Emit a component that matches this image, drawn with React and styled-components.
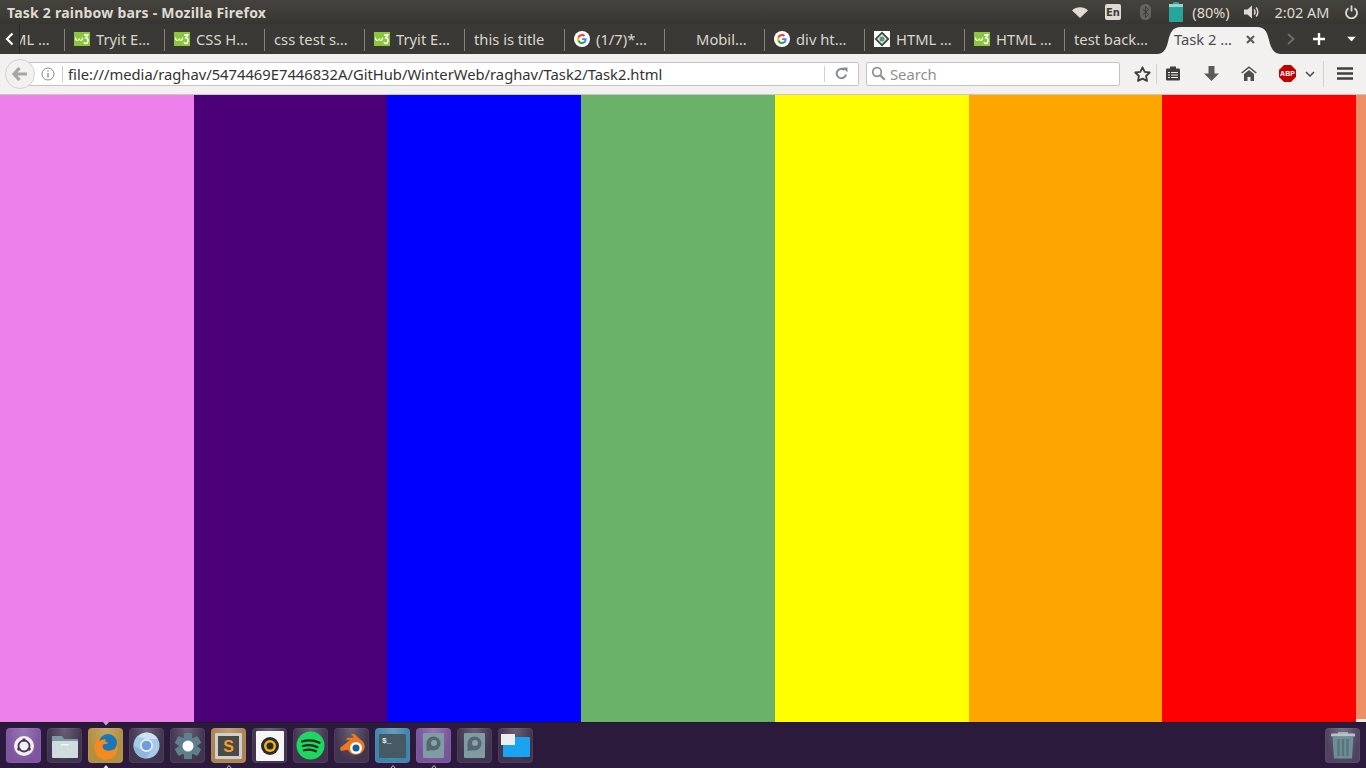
import styled, { createGlobalStyle } from 'styled-components';

const Global = createGlobalStyle`
  html, body { margin:0; padding:0; height:100%; overflow:hidden; }
  body { font-family:"Noto Sans","Open Sans",sans-serif; }
`;

const Screen = styled.div`width:1366px; height:768px; display:flex; flex-direction:column; overflow:hidden; background:#2c1a3d;`;

/* ---- ubuntu panel ---- */
const Panel = styled.div`height:24px; flex:none; display:flex; align-items:center; justify-content:space-between; background:linear-gradient(#45433e,#383632); box-sizing:border-box; padding:0 8px 0 7px;`;
const Title = styled.div`font:bold 14px "Noto Sans",sans-serif; letter-spacing:.23px; color:#dfdbd2; white-space:nowrap;`;
const Tray = styled.div`display:flex; align-items:center; height:24px; font:14.5px "Noto Sans",sans-serif; color:#dfdbd2;`;
const TrayItem = styled.div`display:flex; align-items:center; justify-content:center; flex:none; width:${p=>p.$w}px; margin-left:${p=>p.$ml||0}px;`;
const EnBadge = styled.div`width:16px; height:16px; border-radius:2px; background:#dfdbd2; color:#3c3a36; font:bold 10px "DejaVu Sans",sans-serif; display:flex; align-items:center; justify-content:center;`;

/* ---- tabs ---- */
const TabBar = styled.div`height:30px; flex:none; display:flex; background:#3a3935; color:#dbd7cc; box-sizing:border-box; position:relative;`;
const ArrowBox = styled.div`width:20px; flex:none; display:flex; align-items:center; justify-content:center; border-right:1px solid #2a2926; box-sizing:border-box; height:30px;`;
const Tab = styled.div`width:${p=>p.$w||100}px; flex:none; box-sizing:border-box; height:22px; margin-top:5px; padding-bottom:2px; border-right:1px solid ${p=>p.$last?'transparent':'#86847e'}; display:flex; align-items:center; gap:6px; padding-left:${p=>p.$pl??9}px; text-indent:${p=>p.$indent||0}px; font:14.75px "Noto Sans",sans-serif; white-space:nowrap; overflow:hidden;`;
const FavSlot = styled.span`width:16px; height:16px; flex:none; display:flex; align-items:center;`;
const ActiveTab = styled.div`position:relative; width:112px; flex:none; height:28px; margin-top:2px; color:#4c4c4c; display:flex; align-items:center; justify-content:space-between; padding:0 22px 2px 9px; box-sizing:border-box; font:14.75px "Noto Sans",sans-serif;`;
const TabShape = styled.svg`position:absolute; left:-8px; top:0;`;
const TabLabel = styled.span`position:relative;`;
const TabClose = styled.svg`position:relative;`;
const TabEnd = styled.div`flex:1; position:relative; height:30px;`;
const EndIcon = styled.div`position:absolute; left:${p=>p.$x}px; top:50%; transform:translateY(-50%); display:flex;`;

/* ---- nav bar ---- */
const NavBar = styled.div`height:41px; flex:none; display:flex; align-items:center; background:#f2f1f0; border-bottom:1px solid #c9c7c5; box-sizing:border-box; padding-left:5px; padding-bottom:1px;`;
const BackBtn = styled.div`width:30px; height:30px; border-radius:50%; flex:none; background:#f2f1f0; border:1px solid #d3d1cf; box-sizing:border-box; display:flex; align-items:center; justify-content:center; position:relative; z-index:1; margin-right:-8px;`;
const UrlBar = styled.div`width:832px; height:24px; flex:none; background:#fff; border:1px solid #c5c3c1; border-left:none; border-radius:0 2px 2px 0; box-sizing:border-box; display:flex; align-items:center; padding-left:14px;`;
const InfoDivider = styled.div`width:1px; height:16px; background:#c9c7c5; margin:0 5px 0 7px;`;
const UrlText = styled.div`flex:1; font:14.75px "Noto Sans",sans-serif; color:#333; white-space:nowrap;`;
const Reload = styled.div`width:33px; height:16px; border-left:1px solid #d3d1cf; display:flex; align-items:center; justify-content:center; flex:none;`;
const SearchBox = styled.div`width:254px; height:24px; flex:none; margin-left:7px; background:#fff; border:1px solid #c5c3c1; border-radius:2px; box-sizing:border-box; display:flex; align-items:center; padding-left:4px; gap:4px; font:14.75px "Noto Sans",sans-serif; color:#8f8f8f;`;
const ToolIcons = styled.div`display:flex; align-items:center; flex:1; height:32px;`;
const ToolIcon = styled.div`width:${p=>p.$w}px; margin-left:${p=>p.$ml||0}px; flex:none; display:flex; justify-content:center; align-items:center;`;
const ToolSep = styled.div`width:1px; height:${p=>p.$h||20}px; flex:none; background:#d3d1cf;`;

/* ---- rainbow ---- */
const Bars = styled.div`flex:1; display:flex; background:#ececec; min-height:0;`;
const Bar = styled.div`width:193.71px; flex:none; background:${p=>p.$c};`;
const LastBar = styled.div`flex:1; height:624px; background:#ee8f66;`;

/* ---- dock ---- */
const Dock = styled.div`height:46px; flex:none; display:flex; align-items:center; background:#2c1a3d; box-sizing:border-box; padding:0 6px; gap:6px; position:relative; border-top:1px solid #1f1a28;`;
const Tile = styled.div`position:relative; width:35px; height:35px; flex:none; border-radius:4px; background:radial-gradient(ellipse at 50% 0,rgba(255,255,255,.24),rgba(255,255,255,.03) 70%),${p=>p.$bg||'#3c2e4a'}; box-shadow:inset 0 0 0 1px rgba(255,255,255,.05); display:flex; align-items:center; justify-content:center;`;
const Spacer = styled.div`flex:1;`;
const Pip = styled.svg`position:absolute; left:50%; margin-left:-3px; ${p=>p.$top?'top:-6px;':'bottom:-6px;'}`;

const PipBelow = ({ hollow }) => (
  <Pip width="6" height="4" viewBox="0 0 6 4">
    <path d="M3 .5L5.500 3.500H.5z" fill={hollow ? 'none' : '#efeaf0'} stroke="#efeaf0" strokeWidth=".8"/>
  </Pip>
);

const PipAbove = () => (
  <Pip $top width="6" height="4" viewBox="0 0 6 4"><path d="M0 0h6L3 3.500z" fill="#b8b2be"/></Pip>
);

const W3 = () => (
  <svg width="16" height="14" viewBox="0 0 16 14">
    <rect width="16" height="14" fill="#8cc63f"/>
    <path d="M1.500 5.500c0 2 1 3 2 3s1.500-1 1.700-2c.2 1 .7 2 1.700 2s1.500-1 1.600-3" fill="none" stroke="#fff" strokeWidth="1.200"/>
    <path d="M10 3h3.800l-2 2.800c1.400 0 2.200 1 2.200 2.700S12.900 11.500 11.700 11.500c-.8 0-1.500-.4-1.900-1.200" fill="none" stroke="#fff" strokeWidth="1.400"/>
  </svg>
);

const GoogleG = () => (
  <svg width="16" height="16" viewBox="0 0 16 16">
    <circle cx="8" cy="8" r="8" fill="#fff"/>
    <path d="M12.600 8.200c0-.4 0-.7-.1-1H8v1.900h2.600c-.1.600-.5 1.200-1 1.500v1.300h1.600c1-.9 1.400-2.200 1.400-3.700z" fill="#4285f4"/>
    <path d="M8 13c1.300 0 2.400-.4 3.200-1.200l-1.600-1.200c-.4.300-1 .5-1.600.5-1.200 0-2.300-.8-2.700-2H3.700v1.300C4.500 12 6.100 13 8 13z" fill="#34a853"/>
    <path d="M5.300 9.100c-.2-.7-.2-1.500 0-2.200V5.600H3.700c-.7 1.500-.7 3.300 0 4.800z" fill="#fbbc05"/>
    <path d="M8 5c.7 0 1.300.2 1.800.7l1.400-1.400C10.400 3.500 9.300 3 8 3 6.100 3 4.500 4 3.700 5.600l1.600 1.300C5.700 5.800 6.800 5 8 5z" fill="#ea4335"/>
  </svg>
);

const Diamond = () => (
  <svg width="16" height="16" viewBox="0 0 16 16">
    <rect width="16" height="16" fill="#fff"/>
    <path d="M8 .5L15.500 8 8 15.500.5 8z" fill="#3c4a44"/>
    <path d="M8 3l5 5-5 5-5-5z" fill="#dfe8e0"/>
    <circle cx="8" cy="8" r="2.500" fill="#5c9a6a"/>
  </svg>
);

const DiskIcon = () => (
  <svg width="21" height="25" viewBox="0 0 21 25">
    <rect width="21" height="25" rx="1" fill="#7f9ca5"/>
    <circle cx="10.500" cy="10.500" r="7" fill="#55686f"/>
    <path d="M3.500 11v7l6-1z" fill="#55686f"/>
    <circle cx="11" cy="10" r="3" fill="#8aa3ab"/>
  </svg>
);

const Gear = () => (
  <svg width="28" height="28" viewBox="0 0 28 28">
    {[0, 60, 120, 180, 240, 300].map(a => (
      <rect key={a} x="10" y="1" width="8" height="26" rx="1.500" fill="#5f7f8c" transform={`rotate(${a} 14 14)`}/>
    ))}
    <circle cx="14" cy="14" r="9.500" fill="#5f7f8c"/>
    <circle cx="14" cy="14" r="5.500" fill="#fff"/>
  </svg>
);

const tabs = [
  { icon: <W3/>, text: 'Tryit E…' },
  { icon: <W3/>, text: 'CSS H…' },
  { text: 'css test s…' },
  { icon: <W3/>, text: 'Tryit E…' },
  { text: 'this is title' },
  { icon: <GoogleG/>, text: '(1/7)*…' },
  { blank: true, text: 'Mobil…' },
  { icon: <GoogleG/>, text: 'div ht…' },
  { icon: <Diamond/>, text: 'HTML …' },
  { icon: <W3/>, text: 'HTML …' },
  { text: 'test back…', last: true },
];

const bars = ['#ee80ec', '#4b0078', '#0000ff', '#6ab26a', '#ffff00', '#ffa500', '#ff0000'];

export default function App() {
  return (
    <Screen>
      <Global/>
      <Panel>
        <Title>Task 2 rainbow bars - Mozilla Firefox</Title>
        <Tray>
          <TrayItem $w={18}>
            <svg width="16" height="11" viewBox="0 0 16 11"><path d="M0 3.500C4-.8 12-.8 16 3.500L8 11z" fill="#dfdbd2"/></svg>
          </TrayItem>
          <TrayItem $w={16} $ml={16}><EnBadge>En</EnBadge></TrayItem>
          <TrayItem $w={12} $ml={18}>
            <svg width="11" height="16" viewBox="0 0 11 16"><rect width="11" height="16" rx="5" fill="#66645f"/><path d="M2.500 5l6 5.500-3 3v-11l3 3-6 5.500" fill="none" stroke="#3c3a36"/></svg>
          </TrayItem>
          <TrayItem $w={14} $ml={18}>
            <svg width="14" height="20" viewBox="0 0 14 20"><rect x="4" width="6" height="2" fill="#26a69a"/><rect y="2" width="14" height="18" rx="1" fill="#26a69a"/><rect y="2" width="14" height="3" fill="#9ed3cc"/></svg>
          </TrayItem>
          <TrayItem $w={40} $ml={8}>(80%)</TrayItem>
          <TrayItem $w={16} $ml={12}>
            <svg width="15" height="14" viewBox="0 0 15 14"><path d="M0 4.500h3.500L8 .5v13L3.500 9.500H0z" fill="#dfdbd2"/><path d="M10 4.500a3.500 3.500 0 0 1 0 5M12 2.500a6.500 6.500 0 0 1 0 9" fill="none" stroke="#dfdbd2" strokeWidth="1.500"/></svg>
          </TrayItem>
          <TrayItem $w={56} $ml={15}>2:02 AM</TrayItem>
          <TrayItem $w={14} $ml={14}>
            <svg width="13" height="14" viewBox="0 0 13 14"><path d="M3.500 3.200a5.500 5.500 0 1 0 6 0M6.500 .5v6" fill="none" stroke="#dfdbd2" strokeWidth="1.800"/></svg>
          </TrayItem>
        </Tray>
      </Panel>

      <TabBar>
        <ArrowBox>
          <svg width="9" height="14" viewBox="0 0 9 14"><path d="M7.500 1.500L2 7l5.500 5.500" fill="none" stroke="#fff" strokeWidth="2.200"/></svg>
        </ArrowBox>
        <Tab $w={45} $pl={0} $indent={-7}>ML …</Tab>
        {tabs.map((t, i) => (
          <Tab key={i} $last={t.last}>
            {t.icon ? <FavSlot>{t.icon}</FavSlot> : t.blank ? <FavSlot/> : null}
            {t.text}
          </Tab>
        ))}
        <ActiveTab>
          <TabShape width="124" height="28" viewBox="0 0 124 28">
            <path d="M0 28C6 28 9 24 11 16 13 6 16 1 24 1L100 1C108 1 110 6 112 14 114 23 117 28 124 28Z" fill="#f2f1f0"/>
          </TabShape>
          <TabLabel>Task 2 …</TabLabel>
          <TabClose width="9" height="9" viewBox="0 0 9 9"><path d="M1 1l7 7M8 1L1 8" stroke="#5c5c5c" strokeWidth="2.200"/></TabClose>
        </ActiveTab>
        <TabEnd>
          <EndIcon $x={10}>
            <svg width="8" height="12" viewBox="0 0 8 12"><path d="M1 1l5.500 5L1 11" fill="none" stroke="#6f6e69" strokeWidth="1.800"/></svg>
          </EndIcon>
          <EndIcon $x={35}>
            <svg width="14" height="14" viewBox="0 0 14 14"><path d="M7 1v12M1 7h12" stroke="#fff" strokeWidth="2.400"/></svg>
          </EndIcon>
          <EndIcon $x={70}>
            <svg width="9" height="5" viewBox="0 0 9 5"><path d="M0 0h9L4.500 5z" fill="#fff"/></svg>
          </EndIcon>
        </TabEnd>
      </TabBar>

      <NavBar>
        <BackBtn>
          <svg width="16" height="14" viewBox="0 0 16 14"><path d="M7.500 1L2 7l5.500 6M2.500 7H15" fill="none" stroke="#a8a6a4" strokeWidth="3.200"/></svg>
        </BackBtn>
        <UrlBar>
          <svg width="14" height="14" viewBox="0 0 14 14"><circle cx="7" cy="7" r="6" fill="none" stroke="#8a8886"/><path d="M7 6v4.500M7 3.500v1.300" stroke="#8a8886" strokeWidth="1.300"/></svg>
          <InfoDivider/>
          <UrlText>file:///media/raghav/5474469E7446832A/GitHub/WinterWeb/raghav/Task2/Task2.html</UrlText>
          <Reload>
            <svg width="13" height="13" viewBox="0 0 13 13"><path d="M11 7.500A4.700 4.700 0 1 1 9.500 3" fill="none" stroke="#7e8c98" strokeWidth="2"/><path d="M7.500 .5h5v5z" fill="#7e8c98"/></svg>
          </Reload>
        </UrlBar>
        <SearchBox>
          <svg width="15" height="15" viewBox="0 0 15 15"><circle cx="6" cy="6" r="4.300" fill="none" stroke="#8f8f8f" strokeWidth="1.700"/><path d="M9.300 9.300l4.500 4.500" stroke="#8f8f8f" strokeWidth="2.200"/></svg>
          Search
        </SearchBox>
        <ToolIcons>
          <ToolIcon $w={18} $ml={13}>
            <svg width="17" height="16" viewBox="0 0 17 16"><path d="M8.500 1.300l2.200 4.500 5 .7-3.600 3.500.9 4.900-4.500-2.300-4.500 2.300.9-4.900L1.300 6.500l5-.7z" fill="none" stroke="#3f3f3f" strokeWidth="1.800" strokeLinejoin="round"/></svg>
          </ToolIcon>
          <ToolIcon $w={1} $ml={5}><ToolSep/></ToolIcon>
          <ToolIcon $w={16} $ml={8}>
            <svg width="14" height="15" viewBox="0 0 14 15"><rect y="2.500" width="14" height="12" rx="1" fill="#3f3f3f"/><rect x="4" y=".5" width="6" height="3" fill="#3f3f3f"/><path d="M2 6.500h10M2 9h10M2 11.500h10" stroke="#f2f1f0" strokeWidth="1"/><path d="M4.500 5.500v7.500" stroke="#3f3f3f" strokeWidth="1.200"/></svg>
          </ToolIcon>
          <ToolIcon $w={16} $ml={22}>
            <svg width="15" height="15" viewBox="0 0 15 15"><path d="M4.500 0h6v7.500H15L7.500 15 0 7.500h4.500z" fill="#5a5a5a"/></svg>
          </ToolIcon>
          <ToolIcon $w={16} $ml={22}>
            <svg width="16" height="15" viewBox="0 0 16 15"><path d="M.7 7L8 1.200 15.300 7" fill="none" stroke="#4f4f4f" strokeWidth="1.500"/><path d="M3 8l5-4 5 4v7H9.500v-4h-3v4H3z" fill="#4f4f4f"/></svg>
          </ToolIcon>
          <ToolIcon $w={18} $ml={21}>
            <svg width="17" height="17" viewBox="0 0 17 17"><path d="M5 0h7l5 5v7l-5 5H5l-5-5V5z" fill="#c30000"/><text x="8.500" y="11" fontSize="7" fontWeight="bold" fill="#fff" textAnchor="middle" fontFamily="Liberation Sans">ABP</text></svg>
          </ToolIcon>
          <ToolIcon $w={10} $ml={9}>
            <svg width="10" height="6" viewBox="0 0 10 6"><path d="M1 1l4 4 4-4" fill="none" stroke="#4f4f4f" strokeWidth="1.600"/></svg>
          </ToolIcon>
          <ToolIcon $w={1} $ml={8}><ToolSep $h={26}/></ToolIcon>
          <ToolIcon $w={16} $ml={13}>
            <svg width="16" height="13" viewBox="0 0 16 13"><path d="M0 1.500h16M0 6.500h16M0 11.500h16" stroke="#3f3f3f" strokeWidth="2.400"/></svg>
          </ToolIcon>
        </ToolIcons>
      </NavBar>

      <Bars>
        {bars.map(c => <Bar key={c} $c={c}/>)}
        <LastBar/>
      </Bars>

      <Dock>
        <Tile $bg="#7a4f9c">
          <svg width="26" height="26" viewBox="0 0 26 26"><circle cx="13" cy="13" r="10" fill="#f4f0f6"/><circle cx="13" cy="13" r="5.500" fill="none" stroke="#4a3a55" strokeWidth="1.800"/><circle cx="13" cy="7" r="1.700" fill="#4a3a55"/><circle cx="7.800" cy="16" r="1.700" fill="#4a3a55"/><circle cx="18.200" cy="16" r="1.700" fill="#4a3a55"/></svg>
        </Tile>
        <Tile>
          <svg width="28" height="26" viewBox="0 0 28 26"><path d="M1 3h10l2 3h14v4H1z" fill="#7e9aa0"/><rect x="1" y="8" width="26" height="17" rx="1" fill="#cfdcde"/><rect x="10" y="11" width="8" height="1.500" fill="#f2f5f5"/></svg>
        </Tile>
        <Tile $bg="#b08c3a">
          <PipAbove/>
          <svg width="28" height="28" viewBox="0 0 28 28"><circle cx="14" cy="16" r="11.500" fill="#f58a1f"/><circle cx="16" cy="11" r="9" fill="#1b76b8"/><path d="M5 5c-1 3-2 6-1 9 1 5 5 8 10 8 4 0 7-2 8-5-3 2-6 2-9 1-3-2-3-5-1-6 2 0 3 0 4-1-2-1-3-2-3-4-2 0-4 1-5 2-1-1-2-2-3-4z" fill="#f58a1f"/></svg>
          <PipBelow/>
        </Tile>
        <Tile>
          <svg width="27" height="27" viewBox="0 0 27 27"><circle cx="13.500" cy="13.500" r="13" fill="#a5cbe6"/><path d="M13.500 .5a13 13 0 0 1 11.300 6.500H13.500L5 4.500A13 13 0 0 1 13.500 .5z" fill="#cfe1ef"/><path d="M.5 13.500A13 13 0 0 0 13 26.500l5-8-9 0z" fill="#8db8d9"/><circle cx="13.500" cy="13.500" r="6.500" fill="#e8f1f8"/><circle cx="13.500" cy="13.500" r="4.800" fill="#6f9edb"/></svg>
        </Tile>
        <Tile><Gear/></Tile>
        <Tile $bg="#a8804a">
          <svg width="27" height="26" viewBox="0 0 27 26"><rect width="27" height="26" rx="1" fill="#d0cfcb"/><rect x="3" y="3" width="21" height="20" fill="#4a4a48"/><text x="13.500" y="19" fontSize="16" fontWeight="bold" fill="#f0a030" textAnchor="middle" fontFamily="Liberation Sans">S</text></svg>
          <PipBelow hollow/>
        </Tile>
        <Tile>
          <svg width="28" height="30" viewBox="0 0 28 30"><rect width="28" height="30" rx="1" fill="#f6f6f4"/><circle cx="14" cy="15" r="9" fill="#2a2a2a"/><circle cx="14" cy="15" r="6" fill="#f2b21b"/><circle cx="14" cy="15" r="3.500" fill="#2a2a2a"/></svg>
        </Tile>
        <Tile>
          <svg width="29" height="29" viewBox="0 0 29 29"><circle cx="14.500" cy="14.500" r="14" fill="#1ed760"/><path d="M6 10.500c6-1.700 12-1.300 17.500 1.300M7 15c5-1.300 10-1 14.500 1.200M8 19.300c4-1 8.500-.8 12 1" fill="none" stroke="#1a2a1e" strokeWidth="2.200" strokeLinecap="round"/></svg>
        </Tile>
        <Tile>
          <svg width="28" height="26" viewBox="0 0 28 26"><path d="M2 15l10-8-4-.2 1-1.800 7-.5-3-3 3-.8 9 8c3 4 2 9-3 12-5 2-10 1-12-4L3 18z" fill="#ec7a1c"/><circle cx="18" cy="15" r="6" fill="#fff"/><circle cx="18" cy="15" r="3.500" fill="#1d5d96"/></svg>
        </Tile>
        <Tile $bg="#3a80aa">
          <svg width="27" height="24" viewBox="0 0 27 24"><rect width="27" height="24" rx="1" fill="#465a64"/><text x="3" y="9" fontSize="8" fontWeight="bold" fill="#e8eef0" fontFamily="Liberation Mono">$_</text></svg>
          <PipBelow hollow/>
        </Tile>
        <Tile $bg="#744f98">
          <DiskIcon/>
          <PipBelow hollow/>
        </Tile>
        <Tile><DiskIcon/></Tile>
        <Tile>
          <svg width="29" height="23" viewBox="0 0 29 23"><rect x="2" y="3" width="27" height="20" rx="1" fill="#1aa3f0"/><rect width="14" height="11" fill="#eeeeee"/></svg>
        </Tile>
        <Spacer/>
        <Tile $bg="#4a3d5a">
          <svg width="24" height="27" viewBox="0 0 24 27"><rect x="7" y="0" width="10" height="2" fill="#9fb2b6"/><rect y="1.500" width="24" height="3" rx="1" fill="#b5c4c8"/><path d="M1.500 4.500h21L21 26.500H3z" fill="#6e8f98"/><path d="M7.500 7v17M12 7v17M16.500 7v17" stroke="#58757e" strokeWidth="2.500"/></svg>
        </Tile>
      </Dock>
    </Screen>
  );
}
